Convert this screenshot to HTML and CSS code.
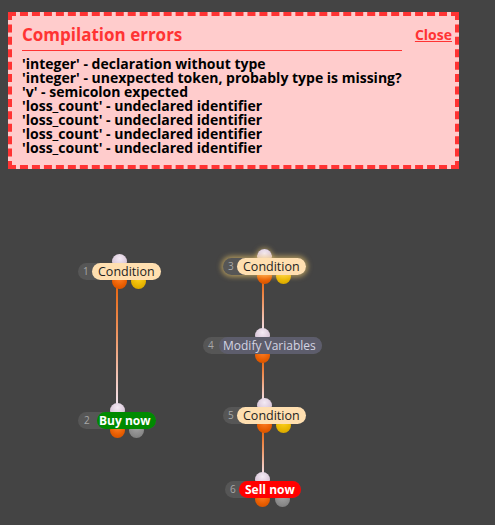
FILE: index.html
```html
<!DOCTYPE html>
<html lang="en">
<head>
<meta charset="utf-8">
<title>Strategy editor</title>
<link rel="stylesheet" href="styles.css">
</head>
<body>
<div class="canvas">
  <section class="errors">
    <div class="errors-body">
      <h1 class="errors-title">Compilation errors</h1>
      <ul class="errors-list">
        <li>'integer' - declaration without type</li>
        <li>'integer' - unexpected token, probably type is missing?</li>
        <li>'v' - semicolon expected</li>
        <li>'loss_count' - undeclared identifier</li>
        <li>'loss_count' - undeclared identifier</li>
        <li>'loss_count' - undeclared identifier</li>
        <li>'loss_count' - undeclared identifier</li>
      </ul>
    </div>
    <a class="close" href="#">Close</a>
  </section>

  <div class="wire w12"></div>
  <div class="wire w34"></div>
  <div class="wire w45"></div>
  <div class="wire w56"></div>

  <div class="node n1">
    <span class="port port-in"></span>
    <div class="pill"><span class="num">1</span><span class="label label-cond">Condition</span></div>
    <span class="port port-out"></span><span class="port port-alt port-yellow"></span>
  </div>

  <div class="node n2">
    <span class="port port-in"></span>
    <div class="pill"><span class="num num-wide">2</span><span class="label label-buy">Buy now</span></div>
    <span class="port port-out"></span><span class="port port-alt port-gray"></span>
  </div>

  <div class="node n3 selected">
    <span class="port port-in"></span>
    <div class="pill"><span class="num">3</span><span class="label label-cond">Condition</span></div>
    <span class="port port-out"></span><span class="port port-alt port-yellow"></span>
  </div>

  <div class="node n4">
    <span class="port port-in"></span>
    <div class="pill"><span class="num num-mid">4</span><span class="label label-mod">Modify Variables</span></div>
    <span class="port port-out"></span>
  </div>

  <div class="node n5">
    <span class="port port-in"></span>
    <div class="pill"><span class="num">5</span><span class="label label-cond">Condition</span></div>
    <span class="port port-out"></span><span class="port port-alt port-yellow"></span>
  </div>

  <div class="node n6">
    <span class="port port-in"></span>
    <div class="pill"><span class="num">6</span><span class="label label-sell">Sell now</span></div>
    <span class="port port-out"></span><span class="port port-alt port-gray"></span>
  </div>
</div>
</body>
</html>
```

FILE: styles.css
```css
html, body {
  margin: 0;
  padding: 0;
  background: #444444;
  font-family: "Open Sans", "Noto Sans", sans-serif;
}

.canvas {
  position: relative;
  width: 495px;
  height: 525px;
  overflow: hidden;
}

/* ---------- error panel ---------- */
.errors {
  box-sizing: border-box;
  width: 451px;
  height: 157px;
  margin: 12px 0 0 8px;
  padding: 8px 3px 0 10px;
  background: #ffcccc;
  border: 4px dashed #ff3333;
  display: flex;
  justify-content: space-between;
  align-items: flex-start;
}

.errors-body {
  display: flex;
  flex-direction: column;
}

.errors-title {
  margin: 0;
  padding-bottom: 4px;
  border-bottom: 1px solid #ff3333;
  color: #ff3333;
  font-size: 17px;
  font-weight: 700;
  line-height: 22px;
}

.errors-list {
  list-style: none;
  margin: 6px 0 0;
  padding: 0;
  color: #000;
  font-size: 14px;
  font-weight: 700;
  line-height: 14px;
  white-space: nowrap;
}

.close {
  margin-top: 1px;
  color: #ff3333;
  font-size: 14px;
  font-weight: 700;
  line-height: 19px;
  text-decoration: underline;
}

/* ---------- wires ---------- */
.wire {
  position: absolute;
  width: 2px;
  background: linear-gradient(to bottom, #e8640c 0%, #ef9a6a 45%, #f3e6f2 100%);
}
.w12 { left: 116px; top: 284px; height: 122px; }
.w34 { left: 262px; top: 280px; height: 52px; }
.w45 { left: 262px; top: 360px; height: 42px; }
.w56 { left: 262px; top: 430px; height: 46px; }

/* ---------- nodes ---------- */
.node {
  position: absolute;
}
.n1 { left: 78px;  top: 263px; }
.n2 { left: 78px;  top: 412px; }
.n3 { left: 223px; top: 258px; }
.n4 { left: 203px; top: 337px; }
.n5 { left: 223px; top: 407px; }
.n6 { left: 225px; top: 481px; }

.pill {
  position: relative;
  z-index: 1;
  display: flex;
  height: 17px;
  background: #565656;
  border-radius: 9px;
}

.num {
  box-sizing: border-box;
  width: 14px;
  padding-left: 5px;
  color: #a8a8a8;
  font-size: 10px;
  line-height: 17px;
}
.num-mid { width: 16px; }
.num-wide { width: 19px; padding-left: 6px; }

.label {
  padding: 0 6px;
  border-radius: 9px;
  font-size: 12.5px;
  line-height: 17px;
  white-space: nowrap;
}
.label-cond {
  background: #ffdfb0;
  color: #1e1e1e;
}
.label-mod {
  background: #5d5d6c;
  color: #d4d4e2;
  font-size: 12px;
  padding: 0 6px 0 4px;
}
.label-buy {
  background: #008a00;
  color: #fff;
  font-weight: 700;
  font-size: 12px;
  padding: 0 6px 0 2px;
}
.label-sell {
  background: #ff0000;
  color: #fff;
  font-weight: 700;
  font-size: 12px;
}

.selected .pill {
  box-shadow: 0 0 5px 2px rgba(255, 214, 110, 0.55);
}
.selected .port-in {
  box-shadow: 0 0 5px 1px rgba(255, 214, 110, 0.5);
}

/* ---------- ports ---------- */
.port {
  position: absolute;
  width: 15px;
  height: 15px;
  border-radius: 50%;
  left: 50%;
  margin-left: -7.5px;
}
.port-in {
  top: -9px;
  background: radial-gradient(circle at 50% 30%, #f4eaf4 0%, #d9c7d9 60%, #c4b0c4 100%);
}
.port-out {
  top: 11px;
  background: radial-gradient(circle at 50% 30%, #ff7e24 0%, #e65c00 60%, #cc4f00 100%);
}
.port-alt {
  top: 11px;
  margin-left: 12px;
}
.port-yellow {
  background: radial-gradient(circle at 50% 30%, #ffd21e 0%, #e6b400 60%, #cc9e00 100%);
}
.port-gray {
  background: radial-gradient(circle at 50% 30%, #a4a4a4 0%, #8a8a8a 60%, #777 100%);
}
```
